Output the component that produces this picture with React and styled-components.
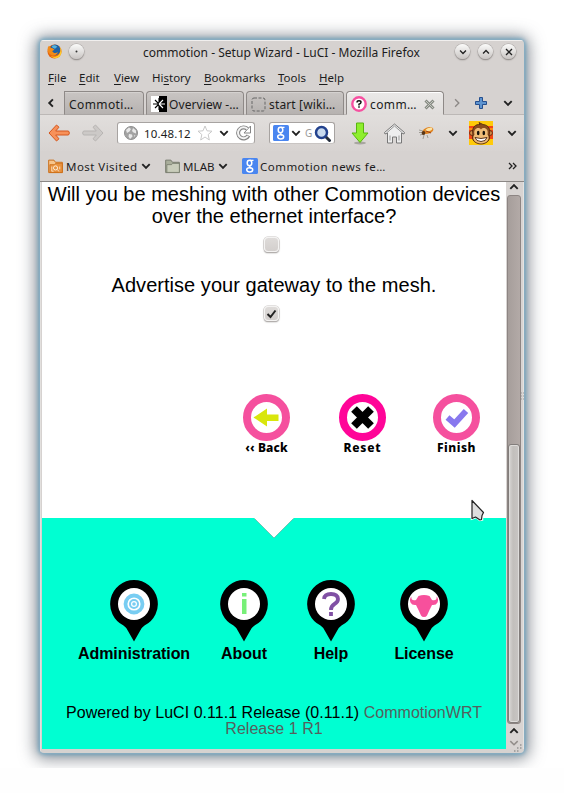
import React from 'react';
import styled, { createGlobalStyle } from 'styled-components';

const GlobalStyle = createGlobalStyle`
  *, *::before, *::after { box-sizing: border-box; }
  html { background: #fefefe; }
  body { margin: 0; color: #1c1c1c; font-family: "Noto Sans", "Open Sans", sans-serif; }
  svg { display: block; flex: none; }
  h2, p, ul { margin: 0; padding: 0; font-weight: normal; list-style: none; }
`;

const Desktop = styled.div`
  position: relative;
  width: 564px;
  height: 768px;
  padding: 40px;
  background: #fff;
  overflow: hidden;
`;

const Window = styled.div`
  display: flex;
  flex-direction: column;
  width: 484px;
  height: 713px;
  border-radius: 4px;
  background: #d6d2d0;
  overflow: hidden;
  box-shadow: 0 0 0 0.5px #8fb4c6, 0 0 5px 1px #5c9dbf, 0 1px 16px 5px rgba(70, 78, 88, 0.62);
`;

const TitleBar = styled.header`
  display: grid;
  grid-template-columns: 22px 22px 1fr 23px 23px 23px;
  align-items: center;
  justify-items: center;
  height: 25px;
  padding: 0 4px 3px 3px;
  border-top: 1px solid #f1efee;
`;

const Title = styled.span`
  padding: 2px 0 0 25px;
  font-size: 12px;
  letter-spacing: 0.02px;
  white-space: nowrap;
  line-height: 16px;
`;

const Round = styled.span`
  display: grid;
  place-items: center;
  width: 15px;
  height: 15px;
  border-radius: 50%;
  background: linear-gradient(#fbfbfa, #c9c5c3);
  box-shadow: 0 0 0 0.5px #aaa6a4, 0 1px 1.5px #77726f;
`;

const MenuBar = styled.nav`
  display: flex;
  align-items: center;
  height: 26px;
  padding: 0 0 1px 8px;
  font-size: 11.5px;
  line-height: 16px;
`;

const MenuItem = styled.span`
  width: ${(p) => p.$width}px;
  white-space: nowrap;
  u { text-underline-offset: 2px; text-decoration-thickness: 1px; }
`;

const TabStrip = styled.div`
  display: grid;
  grid-template-columns: 22px 80px 98px 98px 98px 22px 22px 28px;
  column-gap: 2px;
  height: 24px;
  align-items: center;
  justify-items: center;
  box-shadow: inset 0 -1px #bcb8b6;
`;

const Tab = styled.div`
  display: flex;
  align-items: center;
  gap: ${(p) => p.$gap || 0}px;
  width: 100%;
  height: 24px;
  align-self: end;
  padding: 2px 0 0 4px;
  border: 1px solid #8e8987;
  border-bottom-color: ${(p) => (p.$active ? '#e0dddb' : '#aaa6a4')};
  border-radius: ${(p) => (p.$clipped ? '0 4px 0 0' : '4px 4px 0 0')};
  background: ${(p) => (p.$active ? 'linear-gradient(#ebe9e8, #e0dddb)' : 'linear-gradient(#c9c5c3, #b6b2b0)')};
  box-shadow: inset 0 1px ${(p) => (p.$active ? '#fff' : '#d5d2d0')};
  font-size: 12px;
  letter-spacing: ${(p) => p.$spacing || 0}px;
  white-space: nowrap;
`;

const CloseMark = styled.svg`
  margin: 0 8px 0 auto;
`;

const Toolbar = styled.div`
  display: flex;
  align-items: center;
  height: 36px;
  background: linear-gradient(#e1dedc, #d7d3d1);
`;

const Tool = styled.div`
  display: flex;
  justify-content: center;
  width: ${(p) => p.$width}px;
  margin-left: ${(p) => p.$before}px;
`;

const Field = styled.div`
  display: flex;
  align-items: center;
  width: ${(p) => p.$width}px;
  height: 22px;
  margin-left: ${(p) => p.$before}px;
  padding: 0 ${(p) => p.$pad}px;
  gap: ${(p) => p.$gap}px;
  border: 1px solid #a7a3a1;
  border-bottom-color: #c9c5c3;
  border-radius: 3px;
  background: #fff;
  font-size: 11.5px;
  letter-spacing: 0.15px;
`;

const Hint = styled.span`
  margin-left: 2px;
  color: #999;
  font-size: 10px;
`;

const Bookmarks = styled.div`
  display: flex;
  align-items: center;
  height: 31px;
  padding-left: 8px;
  border-bottom: 1px solid #8b8785;
  background: #d6d2d0;
  font-size: 11.5px;
`;

const Bookmark = styled.div`
  display: flex;
  align-items: center;
  gap: ${(p) => p.$gap ?? 3}px;
  width: ${(p) => p.$width}px;
  letter-spacing: ${(p) => p.$spacing || 0}px;
  white-space: nowrap;
`;

const Body = styled.div`
  display: flex;
  flex: 1;
  padding: 0 0 4px 1px;
  border-left: 1px solid #e3e0de;
`;

const Page = styled.main`
  width: 464px;
  height: 567px;
  background: #fff;
  color: #000;
  display: flex;
  flex-direction: column;
`;

const Questions = styled.section`
  display: flex;
  flex-direction: column;
  align-items: center;
  height: 212px;
  padding-top: 1px;
  font: 20px/22px "Liberation Sans", Arial, sans-serif;
  text-align: center;
`;

const Question = styled.p`
  height: ${(p) => p.$height}px;
  letter-spacing: ${(p) => p.$spacing || 0}px;
  white-space: nowrap;
`;

const Check = styled.span`
  display: grid;
  place-items: center;
  width: 15px;
  height: 15px;
  margin: 0 6px ${(p) => p.$after || 0}px 0;
  border: 1px solid #f4f3f2;
  border-radius: 4px;
  background: linear-gradient(#dedbd9, #d3cfcd);
  box-shadow: 0 0 0 0.6px #c9c5c3, 0 1px 1.5px #85817f;
`;

const Actions = styled.section`
  display: grid;
  grid-template-columns: 96px 96px 92px;
  justify-items: center;
  height: 124px;
  padding-left: 176.5px;
`;

const Action = styled.div`
  display: flex;
  flex-direction: column;
  align-items: center;
  font-size: 12px;
  font-weight: 800;
  line-height: 14px;
  letter-spacing: ${(p) => p.$spacing || 0}px;
  white-space: nowrap;
`;

const Footer = styled.footer`
  flex: 1;
  background: #00ffd2;
  font-family: "Liberation Sans", Arial, sans-serif;
`;

const Notch = styled.svg`
  margin-left: 212px;
`;

const Pins = styled.ul`
  display: grid;
  grid-template-columns: 112px 108px 66px 120px;
  justify-items: center;
  height: 124px;
  padding: 41px 0 0 36px;
`;

const PinItem = styled.li`
  display: flex;
  flex-direction: column;
  align-items: center;
  gap: 3px;
  font-size: 16px;
  font-weight: bold;
  line-height: 18px;
  letter-spacing: -0.05px;
`;

const Powered = styled.p`
  margin-top: 42px;
  font-size: 16px;
  line-height: 16px;
  text-align: center;
  letter-spacing: 0.03px;
  span { color: #55605d; }
`;

const ScrollBar = styled.aside`
  display: flex;
  flex-direction: column;
  align-items: center;
  width: 18px;
  padding-right: 2px;
  background: #d8d4d2;
  box-shadow: inset -1px 0 #e5e3e1;
`;

const Track = styled.div`
  display: flex;
  align-items: flex-end;
  width: 14px;
  height: 529px;
  margin: 3px 0 2px;
  border: 1px solid #8d8583;
  border-radius: 3px;
  background: linear-gradient(90deg, #a69e9b, #b3aaa7);
`;

const Thumb = styled.div`
  width: 12px;
  height: 279px;
  border: 1px solid #827d7b;
  border-radius: 3px;
  background: linear-gradient(90deg, #d9d7d5, #c2bfbc 40%, #c8c5c3);
  box-shadow: inset 0 0 0 1px #dfdddb;
`;

const ArrowSlot = styled.div`
  display: grid;
  place-items: center;
  height: ${(p) => p.$height}px;
`;

const Pointer = styled.svg`
  position: absolute;
  left: 470px;
  top: 499px;
`;

const Grip = styled.svg`
  position: absolute;
  left: ${(p) => p.$x}px;
  top: ${(p) => p.$y}px;
`;

const turns = { down: 0, left: 90, up: 180, right: 270 };
function Chevron({ dir = 'down', size = 10, color = '#222', w = 1.9 }) {
  return (
    <svg width={size} height={size} viewBox="0 0 10 10">
      <path d="M1.3 3.1 5 6.8 8.7 3.1" transform={`rotate(${turns[dir]} 5 5)`} fill="none" stroke={color} strokeWidth={w} />
    </svg>
  );
}

function Firefox() {
  return (
    <svg width="15" height="15" viewBox="0 0 16 16">
      <circle cx="8" cy="8" r="7.5" fill="#e6640d" />
      <circle cx="8.600" cy="6.200" r="5.700" fill="#1e61a5" />
      <path d="M5 2c2-1.500 5-.7 6 1L8.500 5 6 4Z" fill="#55b2dc" />
      <path d="M.8 4 2 1.800 4 4l2 .4L8 6 5.600 7.400c1 2.500 4 2.700 6 1.200C11 12 7 13.500 4 11.500 1 10 .5 7 .8 4Z" fill="#f28a18" />
      <path d="M13.300 3c1.800 3 1.200 7.500-2 9.600C9 14 6 14 4 12.600c2 3 6.500 3.500 9 1.100C16.500 10.500 16 5.500 13.300 3Z" fill="#ffc928" />
    </svg>
  );
}

function Arrow({ flip, fill, stroke }) {
  return (
    <svg width="22" height="18" viewBox="0 0 22 18">
      <path transform={flip ? 'translate(22 0) scale(-1 1)' : undefined} d="M8.500 1 11 3.200 7.700 7H20q1.300 0 1.300 2T20 11H7.700L11 14.800 8.500 17 1 9Z" fill={fill} stroke={stroke} strokeLinejoin="round" />
    </svg>
  );
}

function Globe() {
  return (
    <svg width="14" height="14" viewBox="0 0 14 14">
      <circle cx="7" cy="7" r="6.500" fill="#a3a3a3" stroke="#8f8f8f" />
      <path d="M2 4 5 1.500 7 3 5.500 5.500 3 7ZM9 2l3 2.500v3L9.500 6.500 8 5ZM5 8l3 .5.500 2L6 13 4.500 10.500ZM10 9.500l1.500-.5-1.500 2Z" fill="#e9e9e9" />
    </svg>
  );
}

function GoogleBadge({ size = 16 }) {
  return (
    <svg width={size} height={size} viewBox="0 0 16 16">
      <rect width="16" height="16" rx="1.500" fill="#4a86f0" />
      <g fill="none" stroke="#fff">
        <ellipse cx="7.500" cy="5" rx="2.300" ry="2.700" strokeWidth="1.500" />
        <path d="M8 2.300h3.500M8.500 7.500 7.500 9l2 1.400" strokeWidth="1.200" />
        <ellipse cx="7.700" cy="11.800" rx="3" ry="2.100" strokeWidth="1.500" />
      </g>
    </svg>
  );
}

function Folder({ orange }) {
  const edge = orange ? '#c96a12' : '#73786a';
  return (
    <svg width="15" height="15" viewBox="0 0 16 16">
      <path d="M.7 14V1.200h5.600L8 3.500h7.300V14.500H.7Z" fill={orange ? '#f7c58c' : '#a9ae9b'} stroke={edge} />
      <path d="M2 14.300V6h5l1-1.300h7.300v9.600Z" fill={orange ? '#e8923f' : '#c9cdbb'} stroke={edge} strokeWidth=".8" />
      {orange && <g fill="none" stroke="#fff3e2"><circle cx="8" cy="9.500" r="2.200" /><path d="m9.800 11.300 2.200 2M4 8v5h2M12.500 8v3" strokeWidth=".8" /></g>}
    </svg>
  );
}

function Monkey() {
  return (
    <svg width="24" height="24" viewBox="0 0 24 24">
      <rect width="24" height="24" fill="#f34716" />
      <path d="M0 0h24v5H0ZM0 18h24v6H0Z" fill="#ffca09" />
      <path d="M0 7h24v2H0Z" fill="#ff8b10" />
      <g stroke="#4b220b" strokeWidth=".8">
        <circle cx="3" cy="12" r="2.400" fill="#d98f4c" /><circle cx="21" cy="12" r="2.400" fill="#d98f4c" />
        <path d="M4 14C2 6 7 3 11 3.500L10 1.500l4 2C20 4 22 9 20 14c2.500 5-3 9-8 9S1.500 19 4 14Z" fill="#8a4c1e" />
        <path d="M5.500 13.500C4 7.500 9.500 5.500 12 8.500c2.500-3 8-1 6.500 5 3.500 5-1.500 9-6.500 9s-10-4-6.500-9Z" fill="#efbd78" stroke="none" />
      </g>
      <ellipse cx="9.200" cy="12" rx="1.300" ry="2.300" fill="#17130d" /><ellipse cx="14.800" cy="12" rx="1.300" ry="2.300" fill="#17130d" />
      <path d="M6 16.500q6 2 12 0-1 4-6 4t-6-4Z" fill="#fff" stroke="#4b220b" strokeWidth=".9" />
    </svg>
  );
}

function Ring({ color, children }) {
  return (
    <svg width="47" height="47" viewBox="0 0 47 47">
      <circle cx="23.500" cy="23.500" r="19.500" fill="#fff" stroke={color} strokeWidth="8" />
      {children}
    </svg>
  );
}

function Pin({ children }) {
  return (
    <svg width="48" height="62" viewBox="0 0 48 62">
      <path d="M24 0a24 24 0 0 1 10.500 45.500Q31.500 47.500 30 51L24 61.500 18 51Q16.500 47.500 13.500 45.500A24 24 0 0 1 24 0Z" />
      <circle cx="24" cy="24" r="16" fill="#fff" />
      {children}
    </svg>
  );
}

const menus = [
  ['F', 'ile', '', 31], ['E', 'dit', '', 35], ['V', 'iew', '', 38],
  ['s', 'tory', 'Hi', 52], ['B', 'ookmarks', '', 74], ['T', 'ools', '', 41], ['H', 'elp', '', 40],
];

export default function App() {
  return (
    <Desktop>
      <GlobalStyle />
      <Window>
        <TitleBar>
          <Firefox />
          <Round><svg width="3" height="3"><circle cx="1.500" cy="1.500" r="1" fill="#333" /></svg></Round>
          <Title>commotion - Setup Wizard - LuCI - Mozilla Firefox</Title>
          <Round><Chevron size={8} w={1.700} /></Round>
          <Round><Chevron size={8} w={1.700} dir="up" /></Round>
          <Round><svg width="8" height="8"><path d="m1 1 6 6M7 1 1 7" stroke="#222" strokeWidth="1.300" /></svg></Round>
        </TitleBar>

        <MenuBar>
          {menus.map(([key, rest, lead, width]) => (
            <MenuItem key={key + rest} $width={width}>{lead}<u>{key}</u>{rest}</MenuItem>
          ))}
        </MenuBar>

        <TabStrip>
          <Chevron dir="left" />
          <Tab $clipped $spacing={0.4}>Commoti…</Tab>
          <Tab $gap={2} $spacing={0.1}>
            <svg width="16" height="16" viewBox="0 0 16 16">
              <path d="M0 0h8v16H0Z" fill="#fff" /><path d="M8 0h8v16H8Z" />
              <path d="M8 8H2M8 8 4 4M8 8l-4 4M8 8V2M8 8v6" stroke="#000" strokeWidth="1.100" />
              <path d="M8 8h6M8 8l4-4M8 8l4 4" stroke="#fff" strokeWidth="1.100" />
            </svg>
            Overview -…
          </Tab>
          <Tab $gap={3} $spacing={0.15}>
            <svg width="15" height="15" viewBox="0 0 15 15"><rect x="1" y="1" width="13" height="13" rx="2" fill="none" stroke="#666" strokeDasharray="3 1.500" /></svg>
            start [wiki…
          </Tab>
          <Tab $active $gap={3} $spacing={0.4}>
            <svg width="16" height="16" viewBox="0 0 16 16">
              <circle cx="8" cy="8" r="6.700" fill="#fff" stroke="#f650a0" strokeWidth="2.400" />
              <path d="M6 6.500Q6 4.800 8 4.800t2 1.500Q10 7.500 8 8.200v1.300M8 10.200v1.500" fill="none" stroke="#111" strokeWidth="1.500" />
            </svg>
            comm…
            <CloseMark width="11" height="11" viewBox="0 0 11 11"><path d="m1.500 1.500 8 8M9.500 1.500l-8 8" stroke="#868a82" strokeWidth="3" /><path d="m2 2 7 7M9 2 2 9" stroke="#c4c7c0" strokeWidth="1" /></CloseMark>
          </Tab>
          <Chevron dir="right" color="#8d8987" w={1.400} />
          <svg width="12" height="12" viewBox="0 0 12 12"><path d="M4.500.5h3v4h4v3h-4v4h-3v-4h-4v-3h4Z" fill="#5e94d0" stroke="#254f8e" /></svg>
          <Chevron />
        </TabStrip>

        <Toolbar>
          <Tool $before={8} $width={22}><Arrow fill="#f79159" stroke="#d4571e" /></Tool>
          <Tool $before={12} $width={22}><Arrow flip fill="#ccc9c7" stroke="#b7b4b2" /></Tool>
          <Field $before={13} $width={138} $pad={6} $gap={6}>
            <Globe />
            10.48.12
            <svg width="16" height="16" viewBox="0 0 16 16"><path d="m8 1 2 4.800 5 .4-3.800 3.300L12.300 15 8 12l-4.300 3 1.100-5.500L1 6.200l5-.4Z" fill="#fff" stroke="#c9c9c9" /></svg>
            <Chevron />
            <svg width="17" height="16" viewBox="0 0 17 16"><path d="M12.500 4A5.500 5.500 0 1 0 13.500 10.500" fill="none" stroke="#858585" strokeWidth="4" /><path d="M15.500 1v7H9Z" fill="#fff" stroke="#858585" /><path d="M12.500 4A5.500 5.500 0 1 0 13 11" fill="none" stroke="#f4f4f4" strokeWidth="2" /></svg>
          </Field>
          <Field $before={14} $width={66} $pad={3} $gap={2}>
            <GoogleBadge />
            <Chevron />
            <Hint>G</Hint>
            <svg width="17" height="17" viewBox="0 0 17 17"><path d="m11.500 11.500 4 4" stroke="#252d3c" strokeWidth="3" strokeLinecap="round" /><circle cx="7.500" cy="7.500" r="5.500" fill="#c8daef" stroke="#23428e" strokeWidth="2.500" /></svg>
          </Field>
          <Tool $before={16} $width={18}>
            <svg width="18" height="23" viewBox="0 0 18 23"><ellipse cx="9" cy="21" rx="6" ry="1.500" fill="#a8a5a0" /><path d="M5.500 1h7v10h4.500L9 20.500 1 11h4.500Z" fill="#8eee2d" stroke="#58b510" strokeLinejoin="round" /></svg>
          </Tool>
          <Tool $before={15} $width={21}>
            <svg width="21" height="21" viewBox="0 0 21 21"><path d="M3.500 10v10h5v-6h4v6h5V10l2.500 1 .5-1.500L10.500 1 .5 9.500 1 11Z" fill="#eee" stroke="#777" /><path d="m2.500 10 8-7 8 7M6 12.500v5M15 12.500v5" fill="none" stroke="#999" /></svg>
          </Tool>
          <Tool $before={13} $width={16}>
            <svg width="16" height="14" viewBox="0 0 16 14"><path d="M1 4 5 5M2 9l3-1M5 13l1-4M10 12 9 9M1 6.500h3" stroke="#8d8b83" strokeWidth=".8" /><ellipse cx="10" cy="4.500" rx="5.500" ry="3.200" transform="rotate(-18 10 4.500)" fill="#e08320" /><ellipse cx="11" cy="3.500" rx="3.500" ry="1.500" transform="rotate(-18 11 3.500)" fill="#fce4a5" /><circle cx="5.500" cy="7" r="1.900" fill="#5b3717" /><path d="m8 5 5 2" stroke="#9b3b10" /></svg>
          </Tool>
          <Tool $before={14} $width={9}><Chevron /></Tool>
          <Tool $before={12} $width={24}><Monkey /></Tool>
          <Tool $before={14} $width={9}><Chevron /></Tool>
        </Toolbar>

        <Bookmarks>
          <Bookmark $width={117} $spacing={0.45}><Folder orange />Most Visited<Chevron /></Bookmark>
          <Bookmark $width={77} $spacing={0.1}><Folder />MLAB<Chevron /></Bookmark>
          <Bookmark $width={266} $gap={2} $spacing={0.47}><GoogleBadge />Commotion news fe…</Bookmark>
          <svg width="9" height="8" viewBox="0 0 9 8"><path d="m1 1 3 3-3 3M5 1l3 3-3 3" fill="none" stroke="#222" strokeWidth="1.300" /></svg>
        </Bookmarks>

        <Body>
          <Page>
            <Questions>
              <Question $height={54}>Will you be meshing with other Commotion devices<br />over the ethernet interface?</Question>
              <Check $after={22} />
              <Question $height={32} $spacing={0.04}>Advertise your gateway to the mesh.</Question>
              <Check><svg width="11" height="10" viewBox="0 0 11 10"><path d="m1.500 5 3 3 5-6.500" fill="none" stroke="#222" strokeWidth="2" /></svg></Check>
            </Questions>
            <Actions>
              <Action $spacing={0.15}>
                <Ring color="#f5509e"><path d="M10.500 23.500 24 14.500v6h11.500v6.500H24v5.500Z" fill="#d9e60c" /></Ring>
                ‹‹ Back
              </Action>
              <Action $spacing={0.8}>
                <Ring color="#ff0598"><path d="m15 15 17 17M32 15 15 32" stroke="#000" strokeWidth="8" /></Ring>
                Reset
              </Action>
              <Action $spacing={0.5}>
                <Ring color="#f5509e"><path d="m14.500 23.500 7 6L33 17" fill="none" stroke="#8878ee" strokeWidth="6" /></Ring>
                Finish
              </Action>
            </Actions>
            <Footer>
              <Notch width="40" height="21" viewBox="0 0 40 21"><path d="M0 0h40L20 20Z" fill="#fff" /><path d="M.5.5 20 20 39.500.5" fill="none" stroke="#5e9f92" strokeWidth=".6" /></Notch>
              <Pins>
                <PinItem>
                  <Pin><g fill="none" stroke="#78cdf2"><circle cx="24" cy="24" r="8.500" strokeWidth="3.800" /><circle cx="24" cy="24" r="4" strokeWidth="2" /></g><circle cx="24" cy="24" r="1.800" fill="#78cdf2" /></Pin>
                  Administration
                </PinItem>
                <PinItem><Pin><path d="M22 13h4.500v3.500H22ZM22 19h4.500v15H22Z" fill="#78f078" /></Pin>About</PinItem>
                <PinItem><Pin><path d="M17 19Q17.500 14 24 14t7 5Q31 22 27.500 24 24 26 24 30M24 32v4" fill="none" stroke="#8050a4" strokeWidth="3.800" /></Pin>Help</PinItem>
                <PinItem><Pin><path d="M11.500 16.500Q9 19 10.500 22.500 12 25.500 16 25L18.500 30 21 35.500Q22 37 24 37t3-1.500L29.500 30 32 25q4 .5 5.500-2.500Q39 19 36.500 16.500 37.500 21 32 20L29.500 16Q24 14 18.500 16L16 20Q10.500 21 11.500 16.500Z" fill="#f7509c" /></Pin>License</PinItem>
              </Pins>
              <Powered>Powered by LuCI 0.11.1 Release (0.11.1) <span>CommotionWRT<br />Release 1 R1</span></Powered>
            </Footer>
          </Page>
          <ScrollBar>
            <ArrowSlot $height={10}><Chevron dir="up" /></ArrowSlot>
            <Track><Thumb /></Track>
            <ArrowSlot $height={10}><Chevron dir="up" /></ArrowSlot>
            <ArrowSlot $height={13}><Chevron color="#928d8a" w={1.500} /></ArrowSlot>
          </ScrollBar>
        </Body>
      </Window>
      <Pointer width="16" height="24" viewBox="0 0 16 24">
        <path d="M2 1.500v18l4-1.500 4 3 2-.5v-4.500l2.500-2Z" fill="#e9e9e9" stroke="#fff" strokeWidth="2.500" />
        <path d="M2 1.500v18l3.500-1.500 4.500 3 1.500-.5.5-4 1.500-3Z" fill="#dedede" stroke="#222" strokeWidth="1.200" strokeLinejoin="round" />
      </Pointer>
      <Grip $x={520} $y={392} width="4" height="8"><path d="M1 1h1M3 1h1M1 4h1M3 4h1M1 7h1M3 7h1" stroke="#999" /></Grip>
      <Grip $x={513} $y={744} width="10" height="8"><path d="M7 1h1.500M4 4h1.500M7 4h1.500M1 7h1.500M4 7h1.500" stroke="#777" /></Grip>
    </Desktop>
  );
}
